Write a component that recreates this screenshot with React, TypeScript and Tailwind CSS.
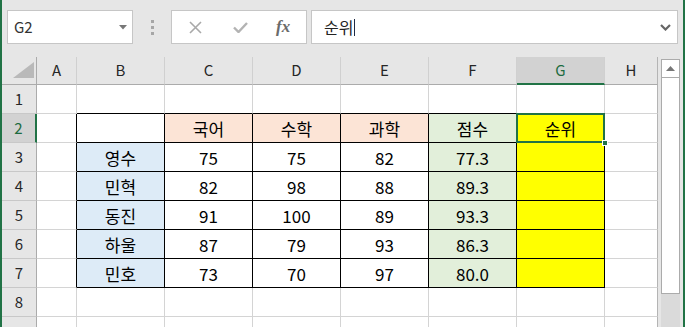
import React from "react";

const colNames = ["A", "B", "C", "D", "E", "F", "G", "H"];
const colWidths = ["w-[40px]", "w-[88px]", "w-[88px]", "w-[88px]", "w-[88px]", "w-[88px]", "w-[88px]", "w-[53px]"];

type CellData = { text: string; bg: string };

const orange = "bg-[#fce4d6]";
const blue = "bg-[#ddebf7]";
const green = "bg-[#e2efda]";
const yellow = "bg-[#ffff00]";

const scores: [string, string, string, string, string][] = [
  ["영수", "75", "75", "82", "77.3"],
  ["민혁", "82", "98", "88", "89.3"],
  ["동진", "91", "100", "89", "93.3"],
  ["하울", "87", "79", "93", "86.3"],
  ["민호", "73", "70", "97", "80.0"],
];

function tableRow(r: number): (CellData | null)[] {
  // index 0..7 => A..H
  if (r === 2) {
    return [
      null,
      { text: "", bg: "bg-white" },
      { text: "국어", bg: orange },
      { text: "수학", bg: orange },
      { text: "과학", bg: orange },
      { text: "점수", bg: green },
      { text: "순위", bg: yellow },
      null,
    ];
  }
  if (r >= 3 && r <= 7) {
    const s = scores[r - 3];
    return [
      null,
      { text: s[0], bg: blue },
      { text: s[1], bg: "bg-white" },
      { text: s[2], bg: "bg-white" },
      { text: s[3], bg: "bg-white" },
      { text: s[4], bg: green },
      { text: "", bg: yellow },
      null,
    ];
  }
  return [null, null, null, null, null, null, null, null];
}

function CornerCell() {
  return (
    <div className="flex h-[28px] w-[35px] shrink-0 items-end justify-end border-r border-b border-r-[#ababab] border-b-[#ababab] bg-[#e6e6e6] pr-[2px] pb-[6px]">
      <svg width="21" height="16" viewBox="0 0 21 16">
        <polygon points="21,0 21,16 0,16" fill="#b9b9b9" />
      </svg>
    </div>
  );
}

function HeaderRow() {
  return (
    <div className="flex h-[28px] shrink-0">
      <CornerCell />
      {colNames.map((name, c) => {
        const selected = name === "G";
        return (
          <div
            key={name}
            className={`${colWidths[c]} flex shrink-0 items-center justify-center border-r ${
              c === 7 ? "border-r-[#b4b4b4]" : "border-r-[#d0d0d0]"
            } ${
              selected
                ? "border-b-2 border-b-[#217346] bg-[#d2d2d2] text-[#1d6b40]"
                : "border-b border-b-[#ababab] bg-[#e6e6e6] text-[#262626]"
            } text-[15px]`}
          >
            {name}
          </div>
        );
      })}
    </div>
  );
}

function RowHeader({ r }: { r: number }) {
  const selected = r === 2;
  // row 9 is only partly in view, its label falls below the window
  return (
    <div
      className={`flex h-[29px] w-[35px] shrink-0 items-center justify-center border-b border-b-[#c8c8c8] text-[15px] ${
        selected
          ? "border-r-2 border-r-[#217346] bg-[#d2d2d2] text-[#1d6b40]"
          : "border-r border-r-[#ababab] bg-[#e6e6e6] text-[#262626]"
      }`}
    >
      {r < 9 ? r : ""}
    </div>
  );
}

function GridRow({ r }: { r: number }) {
  const cells = tableRow(r);
  return (
    <div className="flex h-[29px] shrink-0">
      <RowHeader r={r} />
      {cells.map((cell, c) => {
        const inTable = r >= 2 && r <= 7 && c >= 1 && c <= 6;
        const rightBlack = inTable || (c === 0 && r >= 2 && r <= 7);
        const bottomBlack = inTable || (r === 1 && c >= 1 && c <= 6);
        const isActive = r === 2 && c === 6;
        return (
          <div
            key={c}
            className={`${colWidths[c]} relative flex shrink-0 items-center justify-center border-r border-b text-[17px] text-black ${
              rightBlack ? "border-r-black" : c === 7 ? "border-r-[#b4b4b4]" : "border-r-[#d4d4d4]"
            } ${bottomBlack ? "border-b-black" : "border-b-[#d4d4d4]"} ${cell ? cell.bg : "bg-white"} ${
              isActive ? "z-10" : ""
            }`}
          >
            <span className="leading-none">{cell ? cell.text : ""}</span>
            {isActive && (
              <>
                <div className="pointer-events-none absolute -inset-px border-2 border-[#217346]" />
                <div className="absolute right-[-4px] bottom-[-4px] h-[6px] w-[6px] border border-white bg-[#217346]" />
              </>
            )}
          </div>
        );
      })}
    </div>
  );
}

function Scrollbar() {
  return (
    <div className="flex flex-1 flex-col items-center bg-[#e6e6e6] pt-[2px]">
      <div className="flex h-[19px] w-[19px] items-center justify-center border border-[#ababab] bg-white">
        <svg width="9" height="5" viewBox="0 0 9 5">
          <polygon points="0,5 9,5 4.5,0" fill="#777" />
        </svg>
      </div>
      <div className="flex w-[19px] flex-1 flex-col bg-[#dadada]">
        <div className="h-[216px] w-full border border-t-0 border-[#ababab] bg-white" />
      </div>
    </div>
  );
}

function FormulaBar() {
  return (
    <div className="flex h-[57px] shrink-0 items-start pt-[10px] pl-[5px]">
      <div className="flex h-[34px] w-[126px] items-center justify-between border border-[#c6c6c6] bg-white pr-[5px] pl-[6px]">
        <span className="text-[15px] text-[#333]">G2</span>
        <svg width="8" height="5" viewBox="0 0 8 5">
          <polygon points="0,0 8,0 4,4.5" fill="#777" />
        </svg>
      </div>
      <div className="ml-[18px] flex h-[34px] flex-col items-center justify-center gap-[3px]">
        <div className="h-[3px] w-[3px] bg-[#a6a6a6]" />
        <div className="h-[3px] w-[3px] bg-[#a6a6a6]" />
        <div className="h-[3px] w-[3px] bg-[#a6a6a6]" />
      </div>
      <div className="ml-[17px] flex h-[34px] w-[136px] items-center border border-[#c6c6c6] bg-white">
        <div className="ml-[16px] flex w-[14px] justify-center">
          <svg width="13" height="13" viewBox="0 0 13 13">
            <path d="M1 1 L12 12 M12 1 L1 12" stroke="#a9a9a9" strokeWidth="1.6" fill="none" />
          </svg>
        </div>
        <div className="ml-[30px] flex w-[16px] justify-center">
          <svg width="15" height="11" viewBox="0 0 15 11">
            <path d="M1 5.5 L5.5 10 L14 1" stroke="#b3b3b3" strokeWidth="2.4" fill="none" />
          </svg>
        </div>
        <span className="ml-[28px] font-['Liberation_Serif',serif] text-[17px] font-bold text-[#6b6b6b] italic">
          fx
        </span>
      </div>
      <div className="ml-[4px] flex h-[34px] w-[367px] items-center justify-between border border-[#c6c6c6] bg-white pr-[6px] pl-[12px]">
        <div className="flex items-center">
          <span className="text-[16px] text-[#222]">순위</span>
          <div className="ml-px h-[17px] w-px bg-[#1f2a44]" />
        </div>
        <svg width="11" height="7" viewBox="0 0 11 7">
          <path d="M1 1 L5.5 5.5 L10 1" stroke="#666" strokeWidth="2.2" fill="none" />
        </svg>
      </div>
    </div>
  );
}

export default function App() {
  const rows = [1, 2, 3, 4, 5, 6, 7, 8, 9];
  return (
    <div className="flex h-[327px] w-[685px] flex-col overflow-hidden border-r-2 border-l-2 border-[#217346] bg-[#e6e6e6] font-['Noto_Sans_CJK_KR','Noto_Sans',sans-serif]">
      <FormulaBar />
      <div className="flex min-h-0 flex-1">
        <div className="flex w-[656px] shrink-0 flex-col overflow-hidden">
          <HeaderRow />
          {rows.map((r) => (
            <GridRow key={r} r={r} />
          ))}
        </div>
        <Scrollbar />
      </div>
    </div>
  );
}
